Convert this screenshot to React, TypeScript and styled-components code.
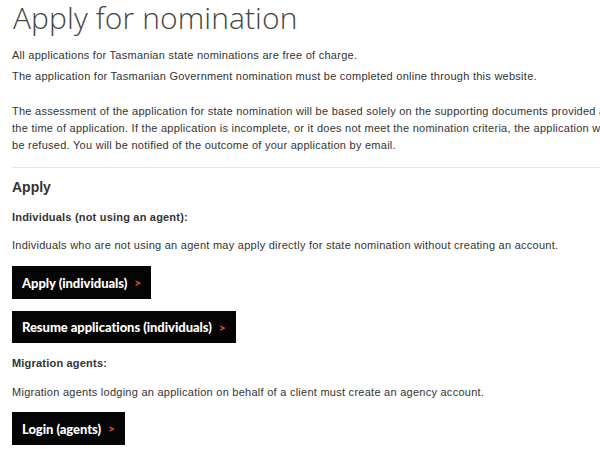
import React from "react";
import styled, { createGlobalStyle } from "styled-components";

const Global = createGlobalStyle`
  html, body { margin: 0; padding: 0; background: #ffffff; overflow: hidden; }
  body { width: 600px; height: 449px; }
`;

const Page = styled.main`
  width: 588px;
  padding: 0 0 0 12px;
  font-family: "Liberation Sans", Arial, sans-serif;
  color: #333333;
  overflow: hidden;
`;

const Title = styled.h1`
  margin: 0;
  font-family: "Open Sans", "Liberation Sans", sans-serif;
  font-weight: 300;
  font-size: 30px;
  line-height: 38px;
  color: #444444;
  letter-spacing: 0.1px;
  padding-left: 1px;
  margin-top: -1px;
`;

const Para = styled.p<{ $mt: number; $nowrap?: boolean }>`
  margin: ${(p) => p.$mt}px 0 0;
  font-size: 11px;
  line-height: 17px;
  letter-spacing: 0.26px;
  color: #333333;
  white-space: ${(p) => (p.$nowrap ? "nowrap" : "normal")};
`;

const Label = styled.p<{ $mt: number }>`
  margin: ${(p) => p.$mt}px 0 0;
  font-size: 11px;
  line-height: 17px;
  letter-spacing: 0.2px;
  font-weight: 700;
  color: #333333;
`;

const Rule = styled.hr`
  margin: 13px 0 0;
  border: 0;
  border-top: 1px solid #e6e6e6;
  height: 0;
  width: 100%;
`;

const Heading = styled.h2`
  margin: 9px 0 0;
  font-size: 14px;
  line-height: 20px;
  font-weight: 700;
  color: #333333;
`;

const ButtonRow = styled.div<{ $mt: number }>`
  margin-top: ${(p) => p.$mt}px;
  display: flex;
`;

const ActionButton = styled.a<{ $h: number }>`
  display: inline-flex;
  align-items: center;
  gap: 7px;
  height: ${(p) => p.$h}px;
  padding: 0 10px 0 10px;
  background: #050505;
  color: #ffffff;
  font-family: Lato, "Open Sans", sans-serif;
  font-weight: 900;
  font-size: 13px;
  letter-spacing: -0.05px;
  text-decoration: none;
  box-sizing: border-box;
`;

const Chevron = styled.span`
  color: #d4542a;
  font-weight: 900;
  font-size: 12px;
`;

export default function App() {
  return (
    <>
      <Global />
      <Page>
        <Title>Apply for nomination</Title>
        <Para $mt={10}>All applications for Tasmanian state nominations are free of charge.</Para>
        <Para $mt={4}>
          The application for Tasmanian Government nomination must be completed online through this website.
        </Para>
        <Para $mt={18} $nowrap>
          The assessment of the application for state nomination will be based solely on the supporting documents
          provided at
          <br />
          the time of application. If the application is incomplete, or it does not meet the nomination criteria, the
          application will
          <br />
          be refused. You will be notified of the outcome of your application by email.
        </Para>
        <Rule />
        <Heading>Apply</Heading>
        <Label $mt={12}>Individuals (not using an agent):</Label>
        <Para $mt={11}>
          Individuals who are not using an agent may apply directly for state nomination without creating an account.
        </Para>
        <ButtonRow $mt={12}>
          <ActionButton href="#" $h={33}>
            Apply (individuals) <Chevron>&gt;</Chevron>
          </ActionButton>
        </ButtonRow>
        <ButtonRow $mt={12}>
          <ActionButton href="#" $h={32}>
            Resume applications (individuals) <Chevron>&gt;</Chevron>
          </ActionButton>
        </ButtonRow>
        <Label $mt={12}>Migration agents:</Label>
        <Para $mt={12}>
          Migration agents lodging an application on behalf of a client must create an agency account.
        </Para>
        <ButtonRow $mt={11}>
          <ActionButton href="#" $h={33}>
            Login (agents) <Chevron>&gt;</Chevron>
          </ActionButton>
        </ButtonRow>
      </Page>
    </>
  );
}
